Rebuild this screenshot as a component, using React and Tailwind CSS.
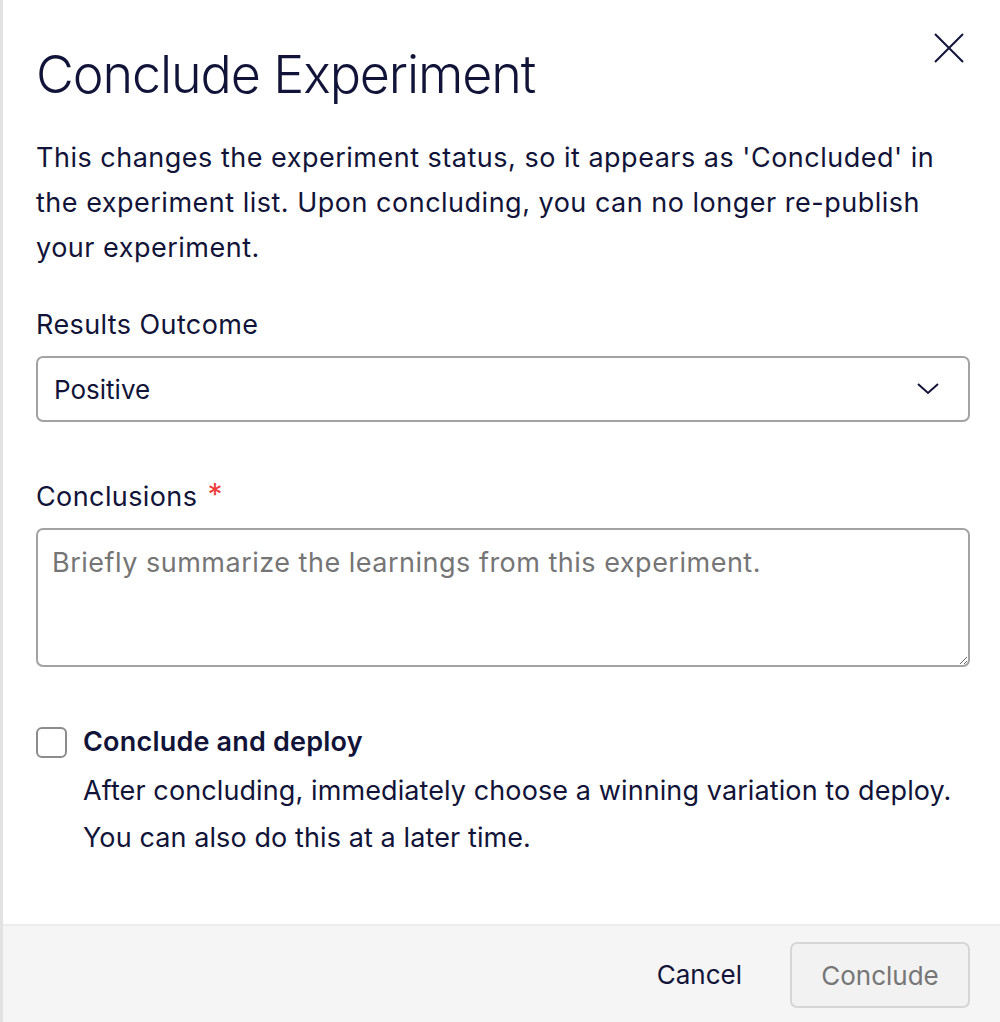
import React, { useState } from "react";

const CloseIcon = () => (
  <svg width="32" height="32" viewBox="0 0 32 32" fill="none">
    <path d="M2 2L30 30M30 2L2 30" stroke="#111438" strokeWidth="2" />
  </svg>
);

const Chevron = () => (
  <svg width="24" height="14" viewBox="0 0 24 14" fill="none">
    <path d="M2 2L12 11L22 2" stroke="#111438" strokeWidth="2" />
  </svg>
);

const App = () => {
  const [outcome, setOutcome] = useState("Positive");
  const [deploy, setDeploy] = useState(false);

  return (
    <div
      className="flex min-h-[1022px] w-[1000px] bg-white text-[#111438]"
      style={{ fontFamily: "Inter, 'Noto Sans', sans-serif" }}
    >
      {/* Backdrop edge */}
      <div className="w-[3px] shrink-0 bg-[#e2e2e2]" />

      {/* Modal */}
      <div className="flex flex-1 flex-col">
        <div className="flex-1 pl-[33px] pr-[30px]">
          {/* Header */}
          <div className="flex items-start justify-between">
            <h1 className="mt-[43px] text-[52px] font-light leading-[64px] tracking-[-1.1px]">
              Conclude Experiment
            </h1>
            <button className="mt-[32px] mr-[5px]">
              <CloseIcon />
            </button>
          </div>

          {/* Description */}
          <p className="mt-[28px] text-[27px] leading-[45px] tracking-[0.5px]">
            This changes the experiment status, so it appears as 'Concluded' in
            the experiment list. Upon concluding, you can no longer re-publish
            your experiment.
          </p>

          {/* Results Outcome */}
          <label className="mt-[32px] block text-[27px] leading-[45px] tracking-[0.4px]">
            Results Outcome
          </label>
          <div className="mt-[9px] flex h-[66px] items-center justify-between rounded-[7px] border-2 border-[#a3a3a3] pl-[16px] pr-[28px]">
            <span className="text-[26px]">{outcome}</span>
            <Chevron />
          </div>

          {/* Conclusions */}
          <label className="mt-[52px] flex items-start text-[27px] leading-[45px] tracking-[0.4px]">
            Conclusions
            <span className="ml-[10px] text-[30px] leading-[40px] text-[#ef3b3b]">*</span>
          </label>
          <textarea
            placeholder="Briefly summarize the learnings from this experiment."
            className="mt-[9px] block h-[139px] w-full resize-y rounded-[7px] border-2 border-[#a3a3a3] px-[14px] py-[12px] text-[27px] leading-[42px] tracking-[0.5px] outline-none placeholder:text-[#757575]"
          />

          {/* Conclude and deploy */}
          <div className="mt-[59px] flex items-start gap-[16px]">
            <button
              onClick={() => setDeploy(!deploy)}
              className="mt-[1px] h-[31px] w-[31px] shrink-0 rounded-[6px] border-2 border-[#8c8c8c] bg-white"
            />
            <div>
              <div className="text-[27px] font-semibold leading-[32px] tracking-[0.2px]">
                Conclude and deploy
              </div>
              <p className="mt-[9px] text-[27px] leading-[47px] tracking-[0.1px]">
                After concluding, immediately choose a winning variation to deploy.
                You can also do this at a later time.
              </p>
            </div>
          </div>
        </div>

        {/* Footer */}
        <div className="mt-[40px] flex h-[98px] items-center justify-end gap-[48px] border-t-2 border-[#ececec] bg-[#f5f5f5] pr-[30px]">
          <button className="text-[26px]">Cancel</button>
          <button className="mt-[2px] h-[66px] w-[180px] rounded-[7px] border-2 border-[#d6d6d6] bg-[#f2f2f2] text-[26px] text-[#767676]">
            Conclude
          </button>
        </div>
      </div>
    </div>
  );
};

export default App;
